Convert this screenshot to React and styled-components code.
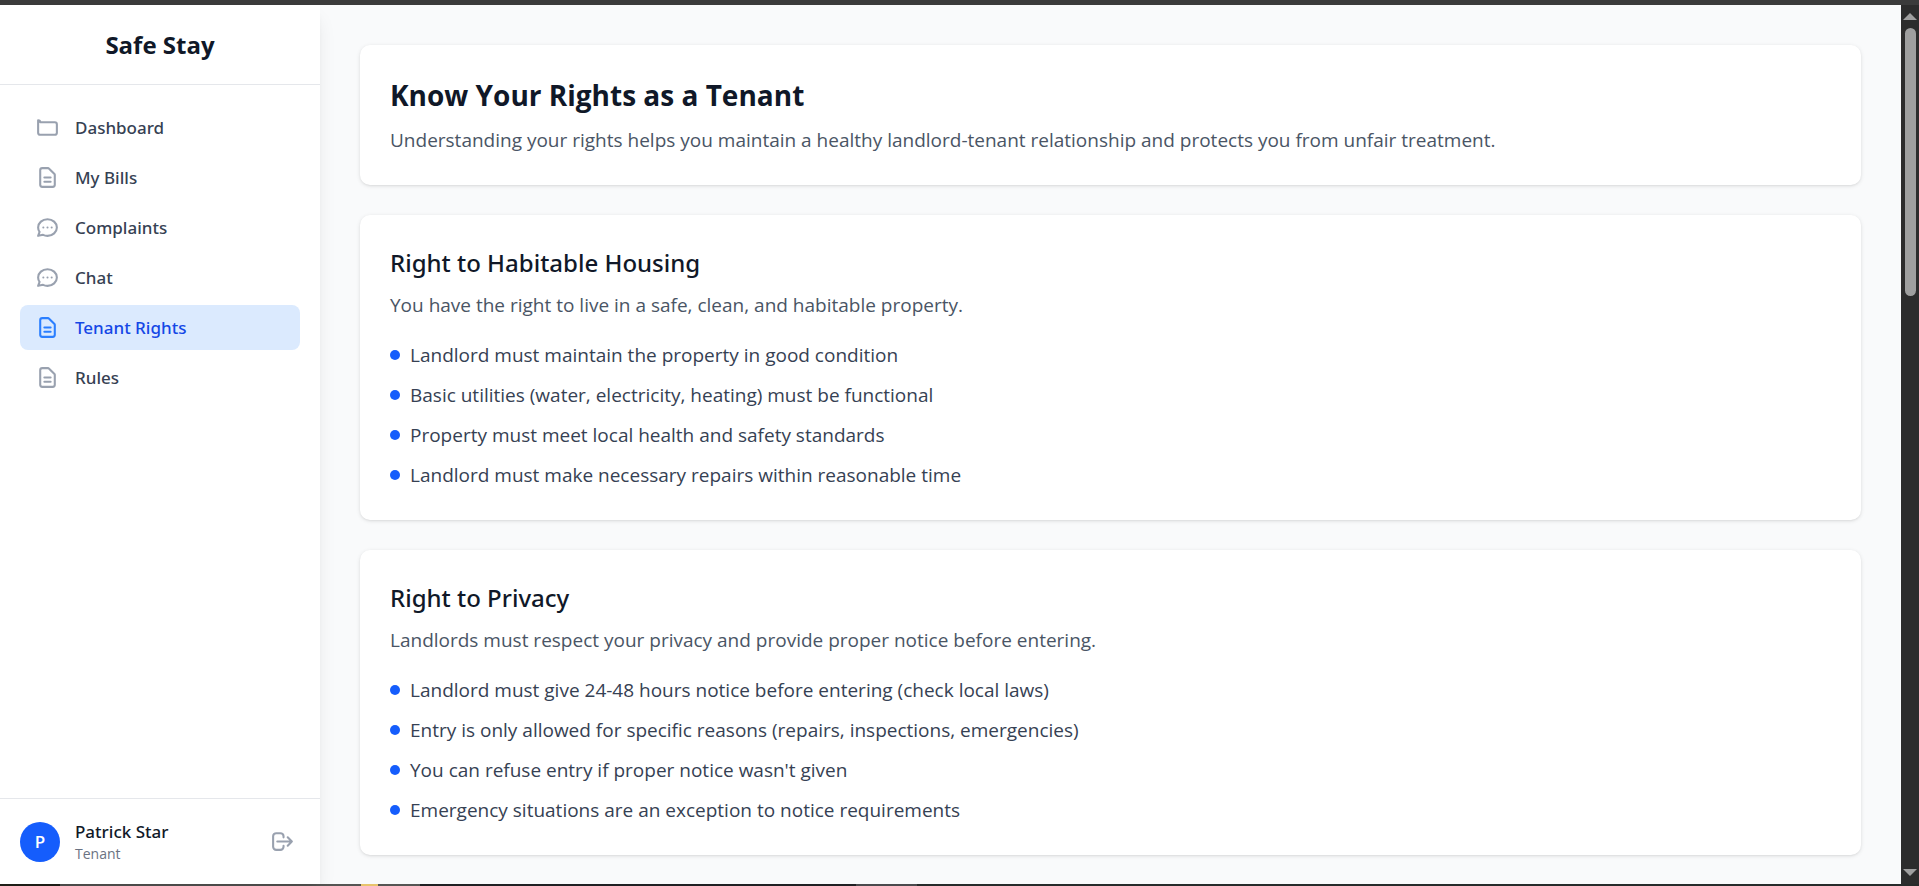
import React from "react";
import styled, { createGlobalStyle } from "styled-components";

const mediumFont = `"Segoe UI", "Noto Sans", sans-serif`;

const GlobalStyle = createGlobalStyle`
  *, *::before, *::after { box-sizing: border-box; }
  body {
    margin: 0;
    background: #f9fafb;
    color: #101828;
    font-family: "Segoe UI", "Open Sans", "Noto Sans", sans-serif;
    font-size: 19px;
    line-height: 30px;
  }
  h1, h2, p, ul { margin: 0; padding: 0; }
  ul { list-style: none; }
`;

const Screen = styled.div`
  display: flex;
  flex-direction: column;
  height: 100vh;
  overflow: hidden;
`;

const TopEdge = styled.div`
  flex: none;
  height: 5px;
  background: #3b3b3b;
`;

const BottomEdge = styled.div`
  flex: none;
  height: 2px;
  background: linear-gradient(
    90deg,
    #22221a 0 60px,
    #555553 60px 361px,
    #e8c46c 361px 378px,
    #555553 378px 420px,
    #202023 420px 856px,
    #4b4a4d 856px 917px,
    #272b2a 917px
  );
`;

const Layout = styled.div`
  display: flex;
  flex: 1;
  min-height: 0;
`;

const Sidebar = styled.aside`
  display: flex;
  flex-direction: column;
  flex: none;
  width: 320px;
  background: #fff;
  box-shadow: 0 12px 19px -4px rgba(0, 0, 0, 0.1), 0 5px 8px -5px rgba(0, 0, 0, 0.1);
  z-index: 1;
`;

const Brand = styled.div`
  display: flex;
  align-items: center;
  justify-content: center;
  height: 80px;
  border-bottom: 1px solid #e5e7eb;
  font-size: 24px;
  font-weight: 700;
`;

const Nav = styled.nav`
  display: flex;
  flex-direction: column;
  flex: 1;
  gap: 5px;
  padding: 20px;
`;

const NavLink = styled.a`
  display: flex;
  align-items: center;
  gap: 15px;
  height: 45px;
  padding: 0 15px;
  border-radius: 8px;
  background: ${(p) => (p.$active ? "#dbeafe" : "transparent")};
  color: ${(p) => (p.$active ? "#1447e6" : "#364153")};
  font-family: ${mediumFont};
  font-size: 17px;
  font-weight: 500;
  text-decoration: none;

  svg { color: ${(p) => (p.$active ? "#2b7fff" : "#99a1af")}; }
`;

const IconSvg = styled.svg`
  display: block;
  flex: none;
  width: 25px;
  height: 25px;
  fill: none;
  stroke: currentColor;
  stroke-width: 2;
  stroke-linecap: round;
  stroke-linejoin: round;
`;

const Account = styled.div`
  display: flex;
  align-items: center;
  gap: 15px;
  padding: 20px;
  border-top: 1px solid #e5e7eb;
`;

const Avatar = styled.div`
  display: flex;
  align-items: center;
  justify-content: center;
  width: 40px;
  height: 40px;
  border-radius: 50%;
  background: #155dfc;
  color: #fff;
  font-size: 17px;
  font-weight: 600;
`;

const Identity = styled.div`
  flex: 1;
`;

const UserName = styled.p`
  font-family: ${mediumFont};
  font-size: 17px;
  font-weight: 500;
  line-height: 25px;
`;

const UserRole = styled.p`
  color: #6a7282;
  font-size: 14px;
  line-height: 20px;
`;

const IconButton = styled.button`
  padding: 5px;
  border: 0;
  background: none;
  color: #99a1af;
  cursor: pointer;
`;

const Main = styled.main`
  display: flex;
  flex-direction: column;
  flex: 1;
  gap: 30px;
  min-width: 0;
  padding: 40px;
  overflow: hidden;
`;

const Card = styled.section`
  flex: none;
  padding: 30px;
  border-radius: 10px;
  background: #fff;
  box-shadow: 0 1px 4px rgba(0, 0, 0, 0.1), 0 1px 3px -1px rgba(0, 0, 0, 0.1);
`;

const PageTitle = styled.h1`
  margin-bottom: 10px;
  font-size: 28px;
  font-weight: 700;
  line-height: 40px;
`;

const CardTitle = styled.h2`
  margin-bottom: 10px;
  font-family: ${mediumFont};
  font-size: 24px;
  font-weight: 500;
  line-height: 35px;
`;

const Lead = styled.p`
  color: #4a5565;
`;

const Points = styled.ul`
  display: flex;
  flex-direction: column;
  gap: 10px;
  margin-top: 20px;
`;

const Point = styled.li`
  display: flex;
  align-items: center;
  gap: 10px;
  color: #364153;

  &::before {
    content: "";
    flex: none;
    width: 10px;
    height: 10px;
    border-radius: 50%;
    background: #155dfc;
  }
`;

const ScrollTrack = styled.div`
  display: flex;
  flex-direction: column;
  align-items: center;
  flex: none;
  gap: 8px;
  width: 18px;
  padding: 8px 0;
  background: #2c2c2c;
`;

const ScrollThumb = styled.div`
  width: 11px;
  height: 31%;
  margin-bottom: auto;
  border-radius: 6px;
  background: #9f9f9f;
`;

const ScrollArrow = styled.svg`
  display: block;
  flex: none;
  width: 14px;
  height: 7px;
  fill: #9f9f9f;
`;

const ICONS = {
  folder: "M3 7v10a2 2 0 002 2h14a2 2 0 002-2V9a2 2 0 00-2-2H5a2 2 0 00-2-2z",
  document:
    "M9 12h6m-6 4h6m2 5H7a2 2 0 01-2-2V5a2 2 0 012-2h5.586a1 1 0 01.707.293l5.414 5.414a1 1 0 01.293.707V19a2 2 0 01-2 2z",
  chat: "M8 12h.01M12 12h.01M16 12h.01M21 12c0 4.418-4.03 8-9 8a9.863 9.863 0 01-4.255-.949L3 20l1.395-3.72C3.512 15.042 3 13.574 3 12c0-4.418 4.03-8 9-8s9 3.582 9 8z",
  logout:
    "M17 16l4-4m0 0l-4-4m4 4H7m6 4v1a3 3 0 01-3 3H6a3 3 0 01-3-3V7a3 3 0 013-3h4a3 3 0 013 3v1",
};

function Icon({ name }) {
  return (
    <IconSvg viewBox="0 0 24 24" aria-hidden="true">
      <path d={ICONS[name]} />
    </IconSvg>
  );
}

const NAV_ITEMS = [
  { label: "Dashboard", icon: "folder" },
  { label: "My Bills", icon: "document" },
  { label: "Complaints", icon: "chat" },
  { label: "Chat", icon: "chat" },
  { label: "Tenant Rights", icon: "document", active: true },
  { label: "Rules", icon: "document" },
];

const RIGHTS = [
  {
    title: "Right to Habitable Housing",
    lead: "You have the right to live in a safe, clean, and habitable property.",
    points: [
      "Landlord must maintain the property in good condition",
      "Basic utilities (water, electricity, heating) must be functional",
      "Property must meet local health and safety standards",
      "Landlord must make necessary repairs within reasonable time",
    ],
  },
  {
    title: "Right to Privacy",
    lead: "Landlords must respect your privacy and provide proper notice before entering.",
    points: [
      "Landlord must give 24-48 hours notice before entering (check local laws)",
      "Entry is only allowed for specific reasons (repairs, inspections, emergencies)",
      "You can refuse entry if proper notice wasn't given",
      "Emergency situations are an exception to notice requirements",
    ],
  },
];

export default function App() {
  return (
    <Screen>
      <GlobalStyle />
      <TopEdge />
      <Layout>
        <Sidebar>
          <Brand>Safe Stay</Brand>
          <Nav>
            {NAV_ITEMS.map((item) => (
              <NavLink
                key={item.label}
                href="#"
                $active={item.active}
                aria-current={item.active ? "page" : undefined}
              >
                <Icon name={item.icon} />
                {item.label}
              </NavLink>
            ))}
          </Nav>
          <Account>
            <Avatar>P</Avatar>
            <Identity>
              <UserName>Patrick Star</UserName>
              <UserRole>Tenant</UserRole>
            </Identity>
            <IconButton type="button" aria-label="Log out">
              <Icon name="logout" />
            </IconButton>
          </Account>
        </Sidebar>
        <Main>
          <Card>
            <PageTitle>Know Your Rights as a Tenant</PageTitle>
            <Lead>
              Understanding your rights helps you maintain a healthy landlord-tenant relationship
              and protects you from unfair treatment.
            </Lead>
          </Card>
          {RIGHTS.map((right) => (
            <Card key={right.title}>
              <CardTitle>{right.title}</CardTitle>
              <Lead>{right.lead}</Lead>
              <Points>
                {right.points.map((point) => (
                  <Point key={point}>{point}</Point>
                ))}
              </Points>
            </Card>
          ))}
        </Main>
        <ScrollTrack aria-hidden="true">
          <ScrollArrow viewBox="0 0 14 7">
            <path d="M7 0L14 7H0z" />
          </ScrollArrow>
          <ScrollThumb />
          <ScrollArrow viewBox="0 0 14 7">
            <path d="M0 0H14L7 7z" />
          </ScrollArrow>
        </ScrollTrack>
      </Layout>
      <BottomEdge />
    </Screen>
  );
}
